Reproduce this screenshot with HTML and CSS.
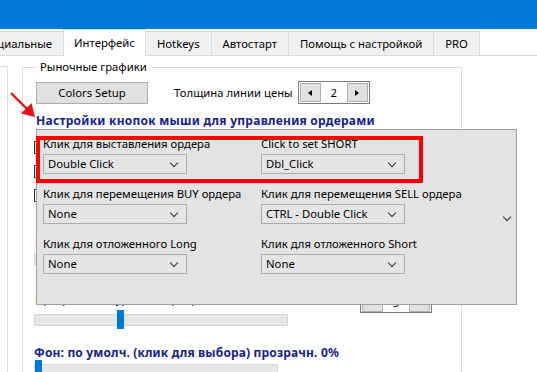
FILE: index.html
```html
<!DOCTYPE html>
<html lang="ru">
<head>
    <meta charset="UTF-8">
    <title>Настройки — Интерфейс</title>
    <link rel="stylesheet" href="styles.css">
</head>
<body>
    <div class="titlebar"></div>

    <div class="tabs">
        <div class="tab first">Специальные</div>
        <div class="tab active">Интерфейс</div>
        <div class="tab">Hotkeys</div>
        <div class="tab">Автостарт</div>
        <div class="tab">Помощь с настройкой</div>
        <div class="tab">PRO</div>
    </div>

    <div class="page">
        <div class="side"></div>
        <fieldset class="group">
            <legend>Рыночные графики</legend>

            <div class="top-row">
                <button class="btn">Colors Setup</button>
                <span class="label">Толщина линии цены</span>
                <div class="spin">
                    <span class="spin-btn"><svg width="4" height="6" viewBox="0 0 4 6"><polygon points="4,0 4,6 0,3" fill="#000"/></svg></span>
                    <span class="spin-val">2</span>
                    <span class="spin-btn"><svg width="4" height="6" viewBox="0 0 4 6"><polygon points="0,0 0,6 4,3" fill="#000"/></svg></span>
                </div>
            </div>

            <div class="heading">Настройки кнопок мыши для управления ордерами</div>

            <label class="check"><span class="box"></span>Показывать кнопки на графике</label>
            <label class="check"><span class="box"></span>Подтверждать выставление ордера</label>
            <label class="check"><span class="box"></span>Звук при выставлении ордера</label>

            <div class="text-row">Размер кнопок</div>
            <div class="field"></div>

            <div class="spin-row">
                <span class="label">Прозрачность уровней ордера</span>
                <div class="spin small">
                    <span class="spin-btn"></span>
                    <span class="spin-val">5</span>
                    <span class="spin-btn"></span>
                </div>
            </div>
            <div class="slider long"><span class="thumb" style="left: 82px"></span></div>

            <div class="heading second">Фон: по умолч. (клик для выбора) прозрачн. 0%</div>
            <div class="slider"><span class="thumb" style="left: 0px"></span></div>
        </fieldset>
    </div>

    <svg class="arrow" width="30" height="30" viewBox="0 0 30 30">
        <line x1="1" y1="1" x2="18" y2="18" stroke="#e8141b" stroke-width="2.4"/>
        <polygon points="25,25 11,21.5 21.5,11" fill="#e8141b"/>
    </svg>

    <div class="popup">
        <div class="popup-grid">
            <div class="cell">
                <div class="cell-label">Клик для выставления ордера</div>
                <div class="select">Double Click<span class="chev"></span></div>
            </div>
            <div class="cell">
                <div class="cell-label">Click to set SHORT</div>
                <div class="select">Dbl_Click<span class="chev"></span></div>
            </div>
            <div class="cell">
                <div class="cell-label">Клик для перемещения BUY ордера</div>
                <div class="select">None<span class="chev"></span></div>
            </div>
            <div class="cell">
                <div class="cell-label">Клик для перемещения SELL ордера</div>
                <div class="select">CTRL - Double Click<span class="chev"></span></div>
            </div>
            <div class="cell">
                <div class="cell-label">Клик для отложенного Long</div>
                <div class="select">None<span class="chev"></span></div>
            </div>
            <div class="cell">
                <div class="cell-label">Клик для отложенного Short</div>
                <div class="select">None<span class="chev"></span></div>
            </div>
        </div>
        <span class="more"></span>
        <div class="highlight"></div>
    </div>
</body>
</html>
```

FILE: styles.css
```css
body {
    margin: 0;
    width: 537px;
    height: 372px;
    overflow: hidden;
    position: relative;
    background: #fff;
    font-family: "Noto Sans", "Open Sans", sans-serif;
    font-size: 11.3px;
    color: #000;
}

.titlebar {
    height: 29px;
    background: #0078d7;
}

/* tab strip */
.tabs {
    display: flex;
    align-items: flex-end;
    height: 26px;
    margin-left: -34px;
    border-bottom: 1px solid #d9d9d9;
}

.tab {
    height: 24px;
    line-height: 23px;
    padding: 0 11px;
    background: #f0f0f0;
    border: 1px solid #d9d9d9;
    border-bottom: none;
    margin-left: -1px;
    box-sizing: border-box;
}

.tab.active {
    height: 27px;
    line-height: 25px;
    padding: 0 10px;
    background: #fff;
    border-color: #cfdfea;
    margin-bottom: -1px;
    position: relative;
    z-index: 1;
}

/* page */
.page {
    display: flex;
}

.side {
    width: 7px;
    height: 320px;
    margin-top: 10px;
    border-top: 1px solid #dcdcdc;
    border-right: 1px solid #dcdcdc;
}

.group {
    margin: 3px 0 0 14px;
    width: 440px;
    box-sizing: border-box;
    border: 1px solid #dcdcdc;
    border-bottom: none;
    padding: 6px 0 0 11px;
    min-height: 330px;
}

.group legend {
    padding: 0 4px;
    margin-left: 2px;
    line-height: 16px;
}

.top-row {
    display: flex;
    align-items: center;
    height: 23px;
}

.btn {
    width: 112px;
    height: 22px;
    margin-left: 2px;
    background: #e1e1e1;
    border: 1px solid #adadad;
    font-family: inherit;
    font-size: 11.3px;
    padding: 0;
}

.label {
    margin-left: 26px;
}

.spin {
    display: flex;
    align-items: center;
    justify-content: space-between;
    width: 72px;
    height: 23px;
    margin-left: 5px;
    border: 1px solid #7a7a7a;
    padding: 1px;
    box-sizing: border-box;
}

.spin-btn {
    display: flex;
    align-items: center;
    justify-content: center;
    width: 19px;
    height: 17px;
    background: #e1e1e1;
    border: 1px solid #adadad;
}

.spin-val {
    flex: 1;
    text-align: center;
}

.heading {
    margin: 8px 0 0 2px;
    font-size: 12px;
    font-weight: bold;
    letter-spacing: 0.25px;
    color: #15218b;
    line-height: 17px;
}

.heading.second {
    margin: 18px 0 0 0;
    letter-spacing: 0.15px;
}

.check {
    display: flex;
    align-items: center;
    gap: 6px;
    height: 13px;
    margin-top: 12px;
}

.check + .check {
    margin-top: 11px;
}

.box {
    width: 11px;
    height: 11px;
    border: 1px solid #333;
    background: #fff;
}

.text-row {
    margin-top: 32px;
    line-height: 16px;
    padding-left: 1px;
}

.field {
    width: 120px;
    height: 10px;
    margin-top: 3px;
    background: #e6e8e8;
    border: 1px solid #d6d6d6;
}

.spin-row {
    display: flex;
    align-items: flex-start;
    margin-top: 26px;
    height: 22px;
}

.spin-row .label {
    margin-left: 1px;
    width: 320px;
    line-height: 15px;
}

.spin.small {
    height: 22px;
}

.slider {
    position: relative;
    width: 242px;
    height: 10px;
    margin-top: 3px;
    background: #e6e8e8;
    border: 1px solid #d6d6d6;
}

.slider.long {
    width: 252px;
    margin-top: 1px;
}

.thumb {
    position: absolute;
    top: -5px;
    width: 7px;
    height: 19px;
    background: #0078d7;
}

/* arrow callout */
.arrow {
    position: absolute;
    left: 10px;
    top: 92px;
}

/* dropdown popup */
.popup {
    position: absolute;
    left: 36px;
    top: 129px;
    width: 481px;
    height: 176px;
    box-sizing: border-box;
    background: #e3e3e3;
    border: 1px solid #a0a0a0;
}

.popup-grid {
    display: grid;
    grid-template-columns: 218px 218px;
    row-gap: 12px;
    padding: 6px 0 0 6px;
}

.cell-label {
    line-height: 16px;
    height: 16px;
    margin-bottom: 2px;
}

.select {
    position: relative;
    width: 144px;
    height: 20px;
    line-height: 18px;
    box-sizing: border-box;
    border: 1px solid #acacac;
    background: #e5e5e5;
    padding-left: 4px;
}

.chev,
.more {
    position: absolute;
    width: 5px;
    height: 5px;
    border-right: 1px solid #333;
    border-bottom: 1px solid #333;
    transform: rotate(45deg);
}

.chev {
    right: 9px;
    top: 5px;
}

.more {
    right: 6px;
    top: 84px;
}

.highlight {
    position: absolute;
    left: -1px;
    top: 6px;
    width: 387px;
    height: 47px;
    box-sizing: border-box;
    border: 4px solid #ff0000;
}
```
